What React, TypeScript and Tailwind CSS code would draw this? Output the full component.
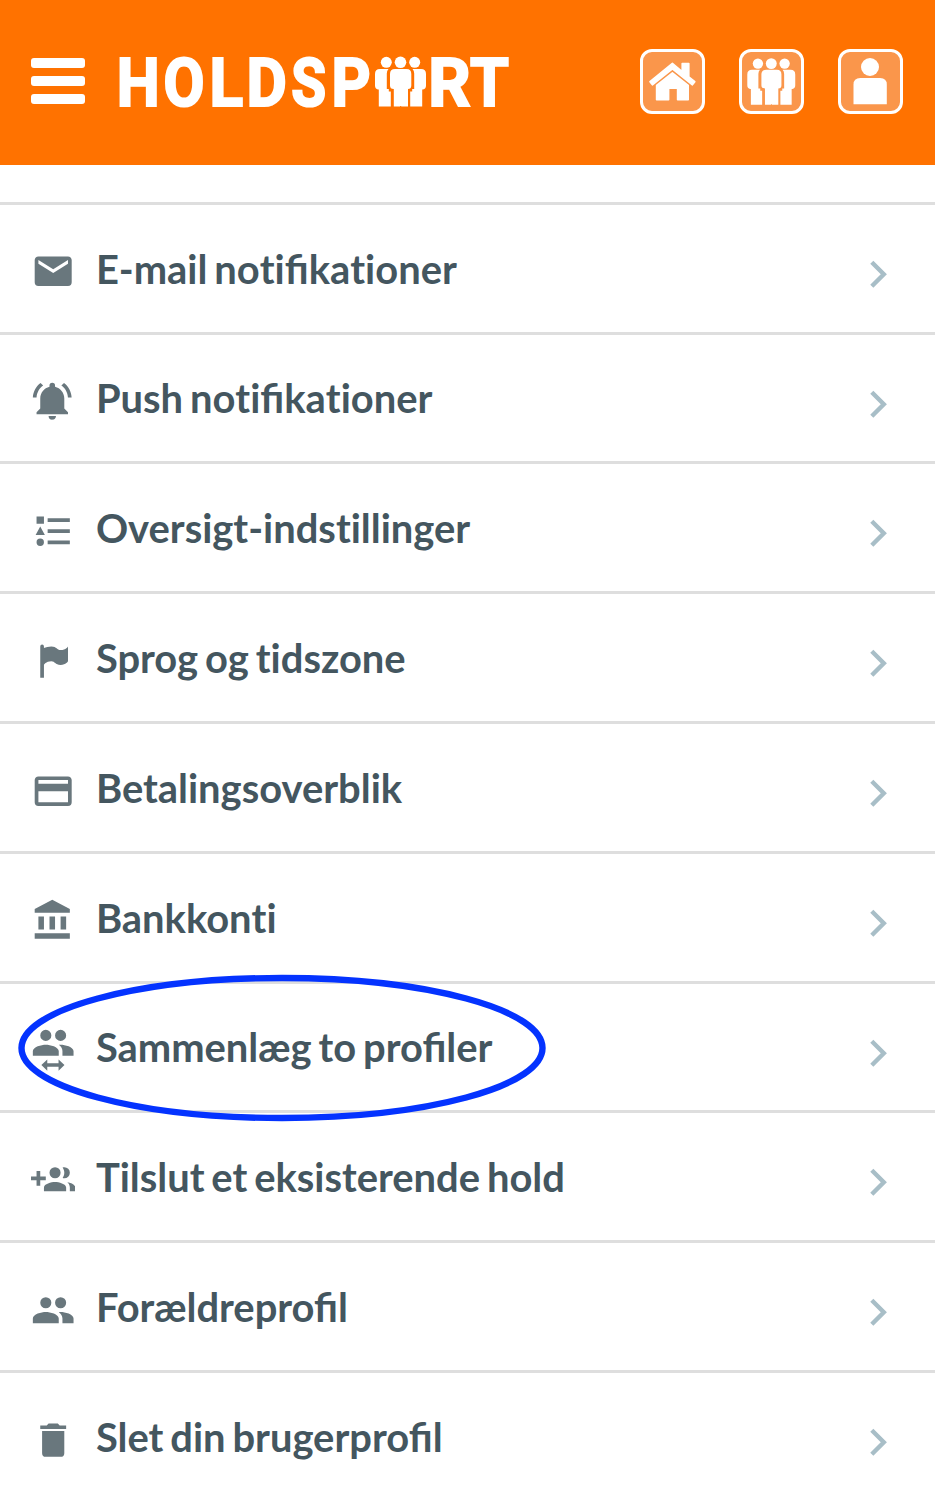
const PEOPLE =
    'M16,13C15.71,13 15.38,13 15.03,13.05C16.19,13.89 17,15 17,16.5V19H23V16.5C23,14.17 18.33,13 16,13M8,13C5.67,13 1,14.17 1,16.5V19H15V16.5C15,14.17 10.33,13 8,13M8,11A3,3 0 0,0 11,8A3,3 0 0,0 8,5A3,3 0 0,0 5,8A3,3 0 0,0 8,11M16,11A3,3 0 0,0 19,8A3,3 0 0,0 16,5A3,3 0 0,0 13,8A3,3 0 0,0 16,11Z';

const ICONS = {
    email: 'M20,8L12,13L4,8V6L12,11L20,6M20,4H4C2.89,4 2,4.89 2,6V18A2,2 0 0,0 4,20H20A2,2 0 0,0 22,18V6C22,4.89 21.1,4 20,4Z',
    bell: 'M11.5,22C11.64,22 11.77,22 11.9,21.96C12.55,21.82 13.09,21.38 13.34,20.78C13.44,20.54 13.5,20.27 13.5,20H9.5A2,2 0 0,0 11.5,22M18,10.5C18,7.43 15.86,4.86 13,4.18V3.5A1.5,1.5 0 0,0 11.5,2A1.5,1.5 0 0,0 10,3.5V4.18C7.13,4.86 5,7.43 5,10.5V16L3,18V19H20V18L18,16M19.97,10H21.97C21.82,6.79 20.24,3.97 17.85,2.15L16.42,3.58C18.46,5 19.82,7.35 19.97,10M6.58,3.58L5.15,2.15C2.76,3.97 1.18,6.79 1,10H3C3.18,7.35 4.54,5 6.58,3.58Z',
    list: 'M5,9.5L7.5,14H2.5L5,9.5M3,4H7V8H3V4M5,20A2,2 0 0,0 7,18A2,2 0 0,0 5,16A2,2 0 0,0 3,18A2,2 0 0,0 5,20M9,5V7H21V5H9M9,19H21V17H9V19M9,13H21V11H9V13Z',
    flag: 'M6,3A1,1 0 0,1 7,4V4.88C8.06,4.44 9.5,4 11,4C14,4 14,6 16,6C19,6 20,4 20,4V12C20,12 19,14 16,14C13,14 13,12 11,12C8,12 7,14 7,14V21H5V4A1,1 0 0,1 6,3Z',
    card: 'M20,8H4V6H20M20,18H4V12H20M20,4H4C2.89,4 2,4.89 2,6V18A2,2 0 0,0 4,20H20A2,2 0 0,0 22,18V6C22,4.89 21.1,4 20,4Z',
    bank: 'M11.5,1L2,6V8H21V6M16,10V17H19V10M2,22H21V19H2M10,10V17H13V10M4,10V17H7V10H4Z',
    people: PEOPLE,
    merge: PEOPLE,
    addPeople: 'M13,13C11,13 7,14 7,16V18H19V16C19,14 15,13 13,13M19.62,13.16C20.45,13.88 21,14.82 21,16V18H24V16C24,14.46 21.63,13.5 19.62,13.16M13,11A3,3 0 0,0 16,8A3,3 0 0,0 13,5A3,3 0 0,0 10,8A3,3 0 0,0 13,11M18,11A3,3 0 0,0 21,8A3,3 0 0,0 18,5C17.68,5 17.37,5.05 17.08,5.14C17.65,5.95 18,6.94 18,8C18,9.06 17.65,10.04 17.08,10.85C17.37,10.95 17.68,11 18,11M8,10H5V7H3V10H0V12H3V15H5V12H8V10Z',
    trash: 'M19,4H15.5L14.5,3H9.5L8.5,4H5V6H19M6,19A2,2 0 0,0 8,21H16A2,2 0 0,0 18,19V7H6V19Z',
};

type IconName = keyof typeof ICONS;

const ITEMS: { icon: IconName; label: string; highlighted?: boolean }[] = [
    { icon: 'email', label: 'E-mail notifikationer' },
    { icon: 'bell', label: 'Push notifikationer' },
    { icon: 'list', label: 'Oversigt-indstillinger' },
    { icon: 'flag', label: 'Sprog og tidszone' },
    { icon: 'card', label: 'Betalingsoverblik' },
    { icon: 'bank', label: 'Bankkonti' },
    { icon: 'merge', label: 'Sammenlæg to profiler', highlighted: true },
    { icon: 'addPeople', label: 'Tilslut et eksisterende hold' },
    { icon: 'people', label: 'Forældreprofil' },
    { icon: 'trash', label: 'Slet din brugerprofil' },
];

function MenuIcon({ name }: { name: IconName }) {
    return (
        <svg viewBox="0 0 24 24" className="mt-[44.6px] h-[44.4px] w-[44.4px] shrink-0 fill-[#69777d]">
            {name === 'merge' ? (
                <>
                    <path d={ICONS.merge} transform="translate(0 -4)" />
                    <path d="M5.6,20L8.8,17V19.1H14.9V17L18.1,20L14.9,23.1V20.9H8.8V23.1Z" />
                </>
            ) : (
                <path d={ICONS[name]} fillRule="evenodd" />
            )}
        </svg>
    );
}

// Keeps the "fi" ligature of Lato but not its "ti" one
function Label({ text }: { text: string }) {
    return (
        <span className="ml-[20.5px] mt-[39.8px] whitespace-nowrap text-[39.9px] leading-[48px] font-bold text-[#44565f] [word-spacing:-2.8px]">
            {text.split(/(ti)/).map((part, i) =>
                part === 'ti' ? (
                    <span key={i} className="[font-variant-ligatures:none]">
                        {part}
                    </span>
                ) : (
                    part
                )
            )}
        </span>
    );
}

// Three figures side by side, drawn on a 51x50 grid
function Team() {
    return (
        <>
            <circle cx="11.3" cy="5.8" r="5.5" />
            <circle cx="25.5" cy="5.8" r="5.8" />
            <circle cx="39.7" cy="5.8" r="5.5" />
            <path d="M5,12.5H13.5Q11.8,14 11.8,17V32.5H13.8V35H15.8V50H3.8V33H3Q0,32.5 0,29V17.5Q0,12.5 5,12.5Z" />
            <path d="M46,12.5H37.5Q39.2,14 39.2,17V32.5H37.2V35H35.2V50H47.2V33H48Q51,32.5 51,29V17.5Q51,12.5 46,12.5Z" />
            <path d="M20,12.5H31.5Q36.3,12.5 36.3,17.5V29Q36.3,32.5 33,32.5V50H26.2V49.5H25.2V50H18.8V32.5Q15,32.5 15,29V17.5Q15,12.5 20,12.5Z" />
        </>
    );
}

const LOGO_LETTERS = [
    { char: 'H', transform: 'translate(.7 54.8) scale(.9 1)' },
    { char: 'O', transform: 'translate(47.4 54.8) scale(.88 1)' },
    { char: 'L', transform: 'translate(93.4 54.8) scale(.92 1)' },
    { char: 'D', transform: 'translate(130.4 54.8) scale(.92 1)' },
    { char: 'S', transform: 'translate(175.3 54.8) scale(.84 1)' },
    { char: 'P', transform: 'translate(215.4 54.8) scale(.9 1)' },
    { char: 'R', transform: 'translate(312.2 54.8) scale(.98 1)' },
    { char: 'T', transform: 'translate(354 54.8) scale(.93 1)' },
];

function Logo() {
    return (
        <svg
            viewBox="-4 -20 410 100"
            className="ml-[27px] h-[100px] w-[410px] shrink-0 fill-white font-['Roboto',sans-serif] text-[67.5px] font-bold"
        >
            {LOGO_LETTERS.map(({ char, transform }) => (
                <text key={char} transform={transform} stroke="white" strokeWidth="2.2">
                    {char}
                </text>
            ))}
            <g transform="translate(259 5.5)">
                <Team />
            </g>
        </svg>
    );
}

function HeaderButton({ children }: { children: React.ReactNode }) {
    return (
        <button className="h-[65px] w-[65px] rounded-[12px] border-[3px] border-white bg-[#fa964b]">
            <svg viewBox="0 0 59 59" className="h-[59px] w-[59px] fill-white">
                {children}
            </svg>
        </button>
    );
}

function Header() {
    return (
        <header className="flex h-[165px] items-start bg-[#ff7200] pl-[31px] pr-8">
            <button className="mt-[58px] flex shrink-0 flex-col gap-2">
                <span className="h-[10px] w-[54px] rounded-[3px] bg-white" />
                <span className="h-[10px] w-[54px] rounded-[3px] bg-white" />
                <span className="h-[10px] w-[54px] rounded-[3px] bg-white" />
            </button>
            <div className="mt-[31px]">
                <Logo />
            </div>
            <div className="ml-auto mt-[49px] flex gap-[34px]">
                <HeaderButton>
                    <g stroke="white" strokeWidth="1.6" strokeLinejoin="round">
                        <path d="M29.4,11.4L39.2,19.6V11.5H45.8V24.8L51.8,29.7L49.4,32.8L29.4,16.8L9.4,32.8L7,29.7Z" />
                        <path d="M29.4,20.8L45.2,33.4V47.8H34.6V36.2H25.6V47.8H13.6V33.4Z" />
                    </g>
                </HeaderButton>
                <HeaderButton>
                    <g transform="translate(5.3 6.2) scale(.94 .93)">
                        <Team />
                    </g>
                </HeaderButton>
                <HeaderButton>
                    <circle cx="29" cy="15" r="9" />
                    <path d="M19.3,26H39Q45.8,26 45.8,32.5V52.3H12.5V32.5Q12.5,26 19.3,26Z" />
                </HeaderButton>
            </div>
        </header>
    );
}

export default function App() {
    return (
        <div className="h-[1497px] w-[935px] overflow-hidden bg-white font-['Lato',sans-serif]">
            <Header />
            <ul className="pt-[36.8px]">
                {ITEMS.map((item) => (
                    <li
                        key={item.label}
                        className="relative flex h-[129.8px] items-start border-t-[3px] border-[#dedede] pl-[31px] pr-[46px]"
                    >
                        <MenuIcon name={item.icon} />
                        <Label text={item.label} />
                        <svg viewBox="0 0 20 30" className="ml-auto mt-[54px] h-[30px] w-5 shrink-0">
                            <path d="M2.8,3.2L14.8,15.2L2.8,27.2" fill="none" stroke="#a8bec7" strokeWidth="4.4" />
                        </svg>
                        {item.highlighted && (
                            <svg viewBox="0 0 530 148" className="absolute left-[17px] top-[-10px] z-10 h-[148px] w-[530px]">
                                <ellipse cx="265" cy="74" rx="260.5" ry="70" fill="none" stroke="#0433ff" strokeWidth="6.4" />
                            </svg>
                        )}
                    </li>
                ))}
            </ul>
        </div>
    );
}
